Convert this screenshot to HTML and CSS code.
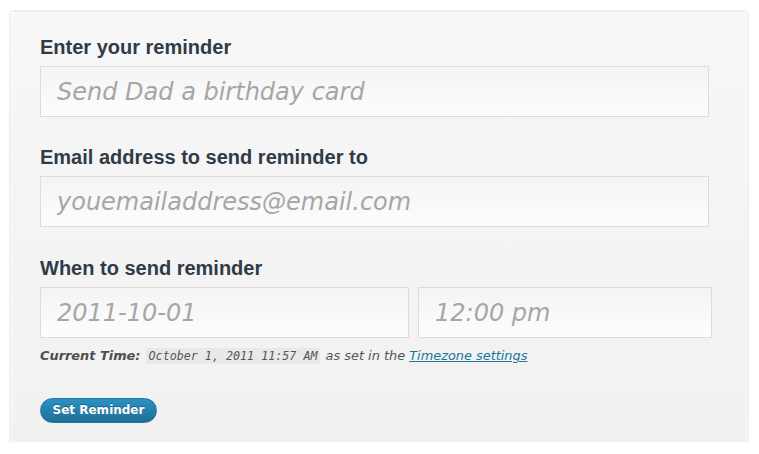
FILE: index.html
```html
<!DOCTYPE html>
<html>
<head>
<meta charset="utf-8">
<link rel="stylesheet" href="styles.css">
</head>
<body>
<form class="card">
  <label class="label" for="r">Enter your reminder</label>
  <input class="field field-full" id="r" type="text" placeholder="Send Dad a birthday card">
  <label class="label label-gap label-tight" for="e">Email address to send reminder to</label>
  <input class="field field-full" id="e" type="text" placeholder="youemailaddress@email.com">
  <label class="label label-gap" for="d">When to send reminder</label>
  <div class="row">
    <input class="field field-date" id="d" type="text" placeholder="2011-10-01">
    <input class="field field-time" type="text" placeholder="12:00 pm">
  </div>
  <p class="note"><strong>Current Time:</strong> <code>October 1, 2011 11:57 AM</code> as set in the <a href="#">Timezone settings</a></p>
  <div class="actions"><button class="button" type="button">Set Reminder</button></div>
</form>
</body>
</html>
```

FILE: styles.css
```css
html, body {
  margin: 0;
  padding: 0;
  background: #ffffff;
}

.card {
  box-sizing: border-box;
  width: 736px;
  height: 431px;
  margin: 12px 0 0 11px;
  padding: 23px 0 18px 28px;
  border: 1px solid #fdfdfd;
  background: linear-gradient(#f7f7f7, #f1f1f1);
  box-shadow: 0 0 3px rgba(0, 0, 0, 0.22);
  display: flex;
  flex-direction: column;
  align-items: flex-start;
}

.label {
  display: block;
  font-family: "Liberation Sans", Arial, sans-serif;
  font-weight: bold;
  font-size: 20px;
  line-height: 23px;
  height: 23px;
  color: #2f3b48;
  margin-bottom: 7px;
}

.label-gap {
  margin-top: 30px;
}

.label-tight {
  margin-top: 29px;
}

.field {
  box-sizing: border-box;
  height: 51px;
  flex: 0 0 auto;
  margin: 0;
  padding: 0 16px;
  border: 1px solid #dcdcdc;
  background: linear-gradient(#f4f4f4, #fdfdfd);
  font-family: "DejaVu Sans", sans-serif;
  font-style: italic;
  font-size: 24px;
  color: #555;
  outline: none;
}

.field::placeholder {
  color: #a6a6a6;
  opacity: 1;
}

.field-full {
  width: 669px;
}

.row {
  display: flex;
  gap: 9px;
  height: 51px;
}

.field-date {
  width: 369px;
}

.field-time {
  width: 294px;
}

.note {
  margin: 8px 0 0;
  font-family: "DejaVu Sans", sans-serif;
  font-style: italic;
  font-size: 12.9px;
  line-height: 20px;
  color: #555;
}

.note strong {
  font-weight: bold;
  color: #4f4f4f;
}

.note code {
  font-family: "DejaVu Sans Mono", monospace;
  font-style: italic;
  font-size: 11.7px;
  padding: 1px 3px;
  margin: 0 1px;
  background: #e9e9e9;
  color: #555;
}

.note a {
  color: #21759b;
  text-decoration: underline;
}

.actions {
  margin-top: 32px;
}

.button {
  box-sizing: border-box;
  height: 25px;
  width: 117px;
  padding: 0;
  border: 1px solid #21759b;
  border-radius: 13px;
  background: linear-gradient(#2a92c4, #1f6f96);
  color: #ffffff;
  font-family: "DejaVu Sans", sans-serif;
  font-weight: bold;
  font-size: 12px;
  line-height: 23px;
  text-shadow: 0 -1px 0 rgba(0, 0, 0, 0.3);
  cursor: pointer;
}
```
